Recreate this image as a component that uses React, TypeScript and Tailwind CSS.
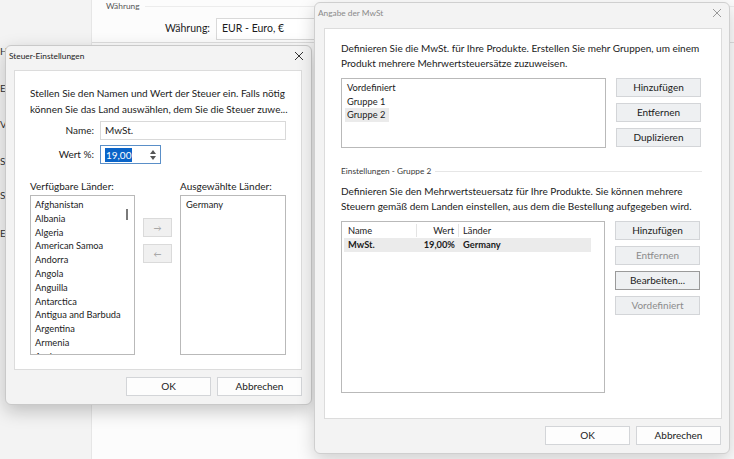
import React from 'react';

const countries = [
  'Afghanistan',
  'Albania',
  'Algeria',
  'American Samoa',
  'Andorra',
  'Angola',
  'Anguilla',
  'Antarctica',
  'Antigua and Barbuda',
  'Argentina',
  'Armenia',
  'Aruba',
];

function CloseIcon({ color = '#333' }: { color?: string }) {
  return (
    <svg width="10" height="10" viewBox="0 0 10 10">
      <path d="M1 1 L9 9 M9 1 L1 9" stroke={color} strokeWidth="1" fill="none" />
    </svg>
  );
}

function Btn({
  children,
  disabled,
  focused,
  white,
}: {
  children: React.ReactNode;
  disabled?: boolean;
  focused?: boolean;
  white?: boolean;
}) {
  return (
    <div
      className={
        'flex h-[19px] w-[85px] shrink-0 items-center justify-center border text-[10px] ' +
        (white ? 'bg-[#fdfdfd] ' : 'bg-[#eef0f2] ') +
        (focused ? 'border-[#9a9a9a] ' : 'border-[#d3d5d8] ') +
        (disabled ? 'text-[#8c8c8c]' : 'text-[#1b1b1b]')
      }
    >
      {children}
    </div>
  );
}

function SteuerDialog() {
  return (
    <div className="absolute left-[5px] top-[45px] flex h-[360px] w-[307px] flex-col rounded-[6px] border border-[#c9c9c9] bg-[#f3f3f3] shadow-[0_6px_18px_rgba(0,0,0,0.22)]">
      {/* Titelleiste */}
      <div className="flex h-[20px] shrink-0 items-center justify-between pl-[3px] pr-[7px]">
        <span className="text-[8.3px] text-[#1b1b1b]">Steuer-Einstellungen</span>
        <CloseIcon />
      </div>
      <div className="ml-[8px] mr-[9px] mt-[4px] flex h-[300px] shrink-0 flex-col border border-[#dcdcdc] bg-white px-[15px] pt-[14px]">
        <p className="whitespace-nowrap text-[10px] leading-[16px] text-[#1b1b1b]">
          Stellen Sie den Namen und Wert der Steuer ein. Falls nötig
          <br />
          können Sie das Land auswählen, dem Sie die Steuer zuwe...
        </p>
        <div className="mt-[4px] flex items-center gap-[6px]">
          <span className="w-[64px] text-right text-[10px] text-[#1b1b1b]">Name:</span>
          <div className="flex h-[19px] w-[186px] items-center border border-[#d9d9d9] px-[4px] text-[10px] text-[#1b1b1b]">
            MwSt.
          </div>
        </div>
        <div className="mt-[5px] flex items-center gap-[6px]">
          <span className="w-[64px] text-right text-[10px] text-[#1b1b1b]">Wert %:</span>
          <div className="flex h-[19px] w-[61px] items-center justify-between border border-[#5a8fc8] pl-[4px] pr-[4px]">
            <span className="bg-[#0a64c8] px-[1px] text-[10px] leading-[14px] text-white">19,00</span>
            <div className="flex flex-col items-center gap-[2px]">
              <svg width="6" height="4" viewBox="0 0 6 4">
                <path d="M0 4 L3 0 L6 4 Z" fill="#555" />
              </svg>
              <svg width="6" height="4" viewBox="0 0 6 4">
                <path d="M0 0 L3 4 L6 0 Z" fill="#555" />
              </svg>
            </div>
          </div>
        </div>

        <div className="mt-[14px] flex">
          <div className="flex w-[105px] flex-col">
            <span className="whitespace-nowrap text-[10px] leading-[16px] text-[#1b1b1b]">Verfügbare Länder:</span>
            <div className="relative mt-[1px] h-[160px] overflow-hidden border border-[#b9b9b9] pl-[4px] pt-[2px]">
              {countries.map((c) => (
                <div key={c} className="h-[13.8px] whitespace-nowrap text-[9.3px] leading-[13.8px] text-[#1b1b1b]">
                  {c}
                </div>
              ))}
              <div className="absolute right-[6px] top-[13px] h-[11px] w-[2px] bg-[#7a7a7a]" />
            </div>
          </div>
          <div className="flex w-[45px] flex-col items-center gap-[7px] pt-[40px]">
            <div className="flex h-[19px] w-[29px] items-center justify-center border border-[#dadada] bg-[#f0f0f0] text-[8px] text-[#9a9a9a]">
              →
            </div>
            <div className="flex h-[19px] w-[29px] items-center justify-center border border-[#dadada] bg-[#f0f0f0] text-[8px] text-[#9a9a9a]">
              ←
            </div>
          </div>
          <div className="flex w-[106px] flex-col">
            <span className="whitespace-nowrap text-[10px] leading-[16px] text-[#1b1b1b]">Ausgewählte Länder:</span>
            <div className="mt-[1px] h-[160px] border border-[#b9b9b9] pl-[5px] pt-[2px]">
              <div className="text-[9.3px] leading-[13.8px] text-[#1b1b1b]">Germany</div>
            </div>
          </div>
        </div>
      </div>
      <div className="mr-[9px] mt-[7px] flex justify-end gap-[6px]">
        <Btn white>OK</Btn>
        <Btn white>Abbrechen</Btn>
      </div>
    </div>
  );
}

function MwStDialog() {
  return (
    <div className="absolute left-[314px] top-[2px] flex h-[452px] w-[416px] flex-col rounded-[6px] border border-[#cfcfcf] bg-[#f3f3f3] shadow-[0_6px_18px_rgba(0,0,0,0.18)]">
      <div className="flex h-[20px] shrink-0 items-center justify-between pl-[3px] pr-[7px]">
        <span className="text-[8.3px] text-[#8a8a8a]">Angabe der MwSt</span>
        <CloseIcon color="#9a9a9a" />
      </div>
      <div className="ml-[9px] mr-[7px] mt-[5px] flex h-[391px] shrink-0 flex-col border border-[#dcdcdc] bg-white pl-[16px] pr-[19px] pt-[12px]">
        <p className="whitespace-nowrap text-[10px] leading-[15px] text-[#1b1b1b]">
          Definieren Sie die MwSt. für Ihre Produkte. Erstellen Sie mehr Gruppen, um einem
          <br />
          Produkt mehrere Mehrwertsteuersätze zuzuweisen.
        </p>
        <div className="mt-[7px] flex gap-[10px]">
          <div className="h-[70px] w-[265px] border border-[#b9b9b9] px-[3px] pt-[2px]">
            <div className="px-[2px] text-[9.3px] leading-[13.5px] text-[#1b1b1b]">Vordefiniert</div>
            <div className="px-[2px] text-[9.3px] leading-[13.5px] text-[#1b1b1b]">Gruppe 1</div>
            <div className="w-fit bg-[#ebebeb] px-[2px] pr-[4px] text-[9.3px] leading-[13.5px] text-[#1b1b1b]">
              Gruppe 2
            </div>
          </div>
          <div className="flex flex-col gap-[6px]">
            <Btn>Hinzufügen</Btn>
            <Btn>Entfernen</Btn>
            <Btn>Duplizieren</Btn>
          </div>
        </div>

        <div className="mt-[17px] flex items-center gap-[4px]">
          <span className="text-[8.3px] leading-[12px] text-[#3a3a3a]">Einstellungen - Gruppe 2</span>
          <div className="h-px flex-1 bg-[#e6e6e6]" />
        </div>

        <p className="mt-[7px] whitespace-nowrap text-[10px] leading-[15px] text-[#1b1b1b]">
          Definieren Sie den Mehrwertsteuersatz für Ihre Produkte. Sie können mehrere
          <br />
          Steuern gemäß dem Landen einstellen, aus dem die Bestellung aufgegeben wird.
        </p>
        <div className="mt-[7px] flex gap-[10px]">
          <div className="h-[172px] w-[264px] border border-[#b9b9b9] px-[2px] pt-[1px]">
            <div className="flex h-[14px] w-[247px] items-center text-[9.3px] text-[#1b1b1b]">
              <span className="w-[73px] border-r border-[#e4e4e4] pl-[4px] leading-[13px]">Name</span>
              <span className="w-[42px] border-r border-[#e4e4e4] pr-[4px] text-right leading-[13px]">Wert</span>
              <span className="pl-[4px] leading-[13px]">Länder</span>
            </div>
            <div className="mt-[1px] flex h-[14px] w-[247px] items-center bg-[#ebebeb] text-[9.3px] font-bold text-[#1b1b1b]">
              <span className="w-[73px] pl-[4px]">MwSt.</span>
              <span className="w-[42px] pr-[4px] text-right">19,00%</span>
              <span className="pl-[4px]">Germany</span>
            </div>
          </div>
          <div className="flex flex-col gap-[6px]">
            <Btn>Hinzufügen</Btn>
            <Btn disabled>Entfernen</Btn>
            <Btn focused>Bearbeiten...</Btn>
            <Btn disabled>Vordefiniert</Btn>
          </div>
        </div>
      </div>
      <div className="mr-[8px] mt-[7px] flex justify-end gap-[6px]">
        <Btn white>OK</Btn>
        <Btn white>Abbrechen</Btn>
      </div>
    </div>
  );
}

export default function App() {
  return (
    <div className="relative flex h-[459px] w-[734px] overflow-hidden bg-white font-['Lato',sans-serif]">
      {/* Hintergrund-Anwendung */}
      <div className="flex w-[92px] flex-col border-r border-[#e6e6e6] bg-[#f3f3f3] pt-[44px] text-[10px] text-[#333]">
        <span className="h-[37px]">H</span>
        <span className="h-[36px]">E</span>
        <span className="h-[37px]">V</span>
        <span className="h-[34px]">S</span>
        <span className="h-[38px]">S</span>
        <span>E</span>
      </div>
      <div className="flex flex-1 flex-col bg-[#fcfcfc]">
        <div className="ml-[14px] flex items-center gap-[6px] pt-[1px]">
          <span className="text-[8.3px] leading-[10px] text-[#555]">Währung</span>
          <div className="h-px flex-1 bg-[#ececec]" />
        </div>
        <div className="mt-[7px] flex items-center gap-[6px] border-b border-[#dedede] pb-[2px]">
          <span className="w-[118px] text-right text-[10.5px] text-[#1b1b1b]">Währung:</span>
          <div className="flex h-[22px] w-[120px] items-center border border-[#d9d9d9] bg-white px-[5px] text-[10.5px] text-[#1b1b1b]">
            EUR - Euro, €
          </div>
        </div>
      </div>

      <SteuerDialog />
      <MwStDialog />
    </div>
  );
}
